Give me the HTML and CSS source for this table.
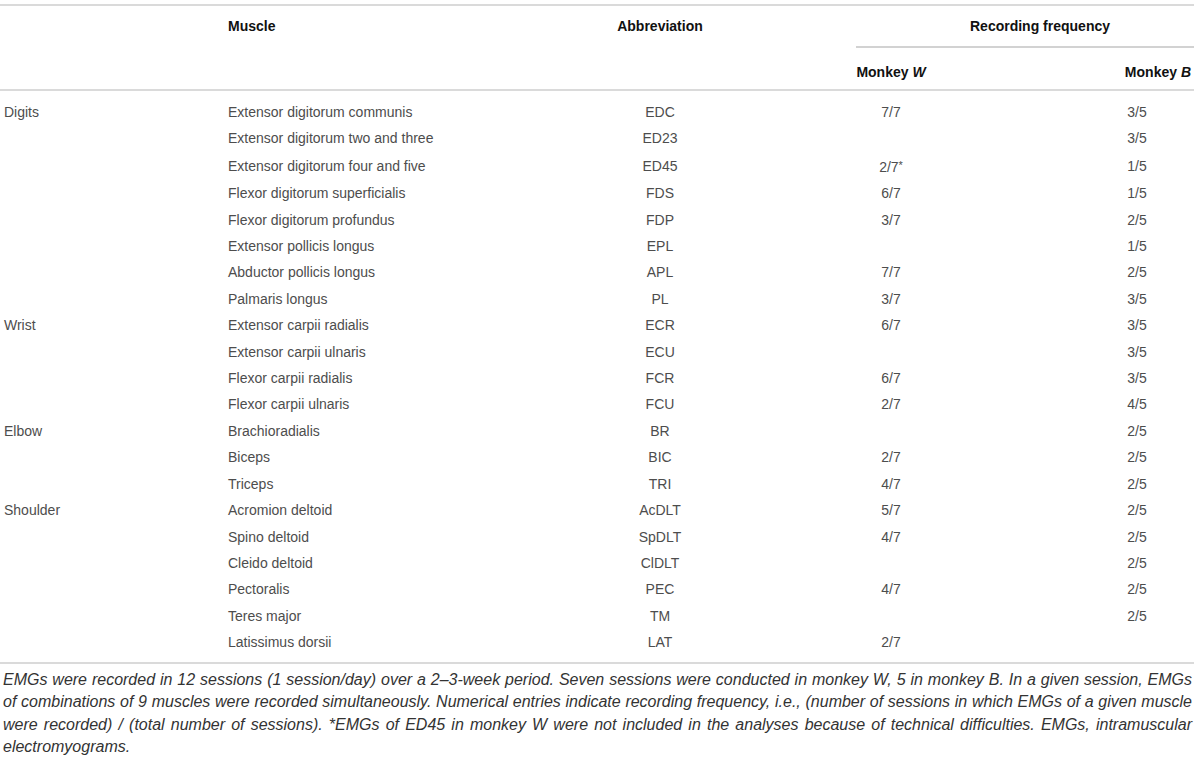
FILE: index.html
```html
<!doctype html>
<html lang="en">
    <head>
        <title>EMG recording table</title>
        <meta charset="utf-8">
        <link rel="stylesheet" href="styles.css">
    </head>
    <body>
        <div class="sheet">
            <table class="muscles">
                <colgroup>
                    <col class="c-group">
                    <col class="c-muscle">
                    <col class="c-abbr">
                    <col class="c-w">
                    <col class="c-b">
                </colgroup>
                <thead>
                    <tr class="head-top">
                        <th rowspan="2" class="group"></th>
                        <th rowspan="2" class="muscle">Muscle</th>
                        <th rowspan="2" class="abbr">Abbreviation</th>
                        <th colspan="2" class="freq">Recording frequency</th>
                    </tr>
                    <tr class="head-sub">
                        <th class="mw">Monkey <i>W</i></th>
                        <th class="mb">Monkey <i>B</i></th>
                    </tr>
                </thead>
                <tbody>
                    <tr><td class="group">Digits</td><td class="muscle">Extensor digitorum communis</td><td class="abbr">EDC</td><td class="mw">7/7</td><td class="mb">3/5</td></tr>
                    <tr><td class="group"></td><td class="muscle">Extensor digitorum two and three</td><td class="abbr">ED23</td><td class="mw"></td><td class="mb">3/5</td></tr>
                    <tr><td class="group"></td><td class="muscle">Extensor digitorum four and five</td><td class="abbr">ED45</td><td class="mw">2/7<span class="star">*</span></td><td class="mb">1/5</td></tr>
                    <tr><td class="group"></td><td class="muscle">Flexor digitorum superficialis</td><td class="abbr">FDS</td><td class="mw">6/7</td><td class="mb">1/5</td></tr>
                    <tr><td class="group"></td><td class="muscle">Flexor digitorum profundus</td><td class="abbr">FDP</td><td class="mw">3/7</td><td class="mb">2/5</td></tr>
                    <tr><td class="group"></td><td class="muscle">Extensor pollicis longus</td><td class="abbr">EPL</td><td class="mw"></td><td class="mb">1/5</td></tr>
                    <tr><td class="group"></td><td class="muscle">Abductor pollicis longus</td><td class="abbr">APL</td><td class="mw">7/7</td><td class="mb">2/5</td></tr>
                    <tr><td class="group"></td><td class="muscle">Palmaris longus</td><td class="abbr">PL</td><td class="mw">3/7</td><td class="mb">3/5</td></tr>
                    <tr><td class="group">Wrist</td><td class="muscle">Extensor carpii radialis</td><td class="abbr">ECR</td><td class="mw">6/7</td><td class="mb">3/5</td></tr>
                    <tr><td class="group"></td><td class="muscle">Extensor carpii ulnaris</td><td class="abbr">ECU</td><td class="mw"></td><td class="mb">3/5</td></tr>
                    <tr><td class="group"></td><td class="muscle">Flexor carpii radialis</td><td class="abbr">FCR</td><td class="mw">6/7</td><td class="mb">3/5</td></tr>
                    <tr><td class="group"></td><td class="muscle">Flexor carpii ulnaris</td><td class="abbr">FCU</td><td class="mw">2/7</td><td class="mb">4/5</td></tr>
                    <tr><td class="group">Elbow</td><td class="muscle">Brachioradialis</td><td class="abbr">BR</td><td class="mw"></td><td class="mb">2/5</td></tr>
                    <tr><td class="group"></td><td class="muscle">Biceps</td><td class="abbr">BIC</td><td class="mw">2/7</td><td class="mb">2/5</td></tr>
                    <tr><td class="group"></td><td class="muscle">Triceps</td><td class="abbr">TRI</td><td class="mw">4/7</td><td class="mb">2/5</td></tr>
                    <tr><td class="group">Shoulder</td><td class="muscle">Acromion deltoid</td><td class="abbr">AcDLT</td><td class="mw">5/7</td><td class="mb">2/5</td></tr>
                    <tr><td class="group"></td><td class="muscle">Spino deltoid</td><td class="abbr">SpDLT</td><td class="mw">4/7</td><td class="mb">2/5</td></tr>
                    <tr><td class="group"></td><td class="muscle">Cleido deltoid</td><td class="abbr">ClDLT</td><td class="mw"></td><td class="mb">2/5</td></tr>
                    <tr><td class="group"></td><td class="muscle">Pectoralis</td><td class="abbr">PEC</td><td class="mw">4/7</td><td class="mb">2/5</td></tr>
                    <tr><td class="group"></td><td class="muscle">Teres major</td><td class="abbr">TM</td><td class="mw"></td><td class="mb">2/5</td></tr>
                    <tr><td class="group"></td><td class="muscle">Latissimus dorsii</td><td class="abbr">LAT</td><td class="mw">2/7</td><td class="mb"></td></tr>
                </tbody>
            </table>
            <p class="note">EMGs were recorded in 12 sessions (1 session/day) over a 2&ndash;3-week period. Seven sessions were conducted in monkey W, 5 in monkey B. In a given session, EMGs of combinations of 9 muscles were recorded simultaneously. Numerical entries indicate recording frequency, i.e., (number of sessions in which EMGs of a given muscle were recorded) / (total number of sessions). *EMGs of ED45 in monkey W were not included in the analyses because of technical difficulties. EMGs, intramuscular electromyograms.</p>
        </div>
    </body>
</html>
```

FILE: styles.css
```css
body
{
    margin: 0;
    background-color: #fff;
    color: #4d4d4d;
    font-family: "Liberation Sans", Arial, sans-serif;
    font-size: 14px;
}
.sheet
{
    width: 1194px;
    padding-top: 4px;
}
.muscles
{
    width: 100%;
    border-spacing: 0;
    table-layout: fixed;
}
.c-group { width: 228px; }
.c-muscle { width: 352px; }
.c-abbr { width: 276px; }
.c-w { width: 70px; }
.c-b { width: 268px; }

.muscles th
{
    color: #111;
    font-weight: bold;
    line-height: 20px;
    vertical-align: top;
    white-space: nowrap;
}
.head-top th
{
    border-top: 2px solid #dadada;
    padding: 10px 0 10px 0;
}
.head-sub th
{
    padding: 14px 0 7px 0;
}
.muscles thead th[rowspan],
.head-sub th
{
    border-bottom: 2px solid #dadada;
}
.muscles th.freq
{
    border-bottom: 2px solid #d2d2d2;
    padding-left: 30px;
}
.muscles td
{
    padding: 0;
    line-height: 26.4px;
    white-space: nowrap;
}
.muscles tbody tr:first-child td { padding-top: 8px; }
.muscles tbody tr:last-child td
{
    padding-bottom: 6px;
    border-bottom: 2px solid #dadada;
}
.group
{
    text-align: left;
    padding-left: 4px !important;
}
.muscle { text-align: left; }
.abbr
{
    text-align: center;
    padding-right: 116px !important;
}
.mw { text-align: center; }
td.mb
{
    text-align: center;
    padding-left: 154px;
}
.muscles th.mb
{
    text-align: right;
    padding-right: 3px;
}
.freq { text-align: center; }
.star
{
    font-size: 11px;
    vertical-align: 3px;
}
.note
{
    margin: 0;
    padding: 5px 2px 0 3px;
    color: #333;
    font-size: 16px;
    font-style: italic;
    line-height: 22.5px;
    text-align: justify;
}
```
